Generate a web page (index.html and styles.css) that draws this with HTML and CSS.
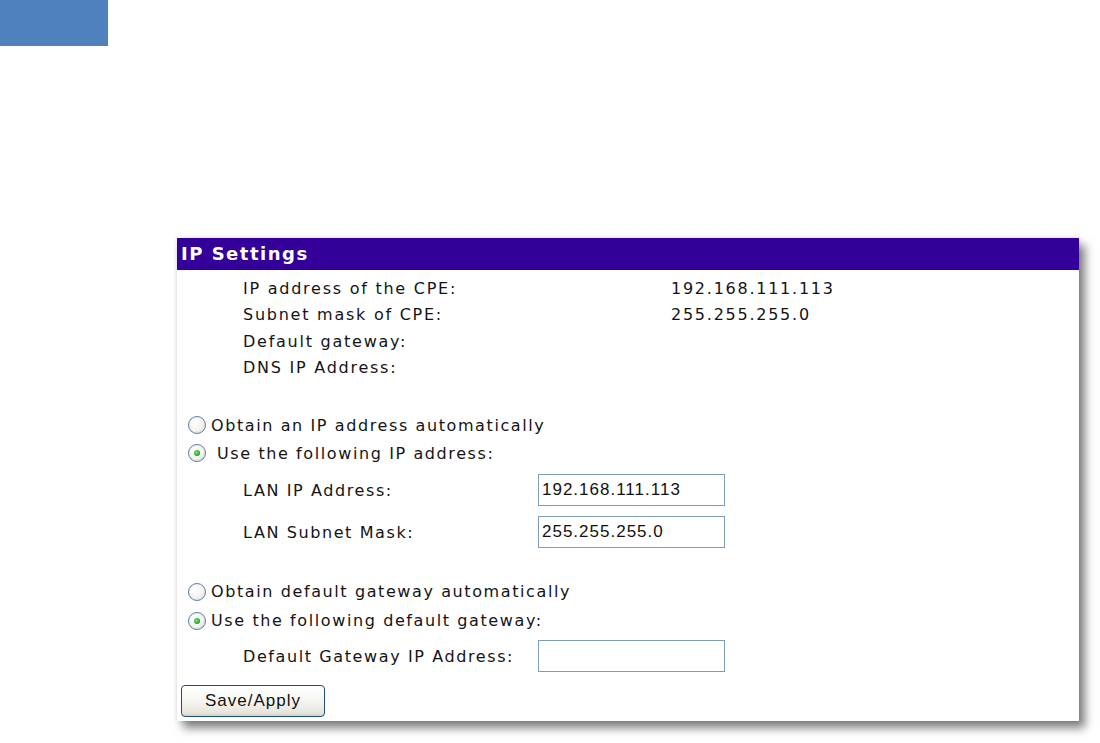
FILE: index.html
```html
<!DOCTYPE html>
<html>
<head>
<meta charset="utf-8">
<title>IP Settings</title>
<link rel="stylesheet" href="styles.css">
</head>
<body>
<div class="corner-block"></div>
<div class="panel">
  <div class="panel-title">IP Settings</div>
  <div class="info">
    <div class="info-label">IP address of the CPE:</div><div class="info-value">192.168.111.113</div>
    <div class="info-label">Subnet mask of CPE:</div><div class="info-value">255.255.255.0</div>
    <div class="info-label">Default gateway:</div><div class="info-value"></div>
    <div class="info-label">DNS IP Address:</div><div class="info-value"></div>
  </div>

  <div class="radio-group first-group">
    <label class="radio-row"><span class="radio"></span><span class="radio-text">Obtain an IP address automatically</span></label>
    <label class="radio-row"><span class="radio checked"></span><span class="radio-text spaced">Use the following IP address:</span></label>
  </div>
  <div class="field-group">
    <div class="field-row"><span class="field-label">LAN IP Address:</span><span class="field-input">192.168.111.113</span></div>
    <div class="field-row"><span class="field-label">LAN Subnet Mask:</span><span class="field-input">255.255.255.0</span></div>
  </div>

  <div class="radio-group second-group">
    <label class="radio-row"><span class="radio"></span><span class="radio-text">Obtain default gateway automatically</span></label>
    <label class="radio-row"><span class="radio checked"></span><span class="radio-text">Use the following default gateway:</span></label>
  </div>
  <div class="field-group gw-group">
    <div class="field-row"><span class="field-label">Default Gateway IP Address:</span><span class="field-input"></span></div>
  </div>
  <div class="actions">
    <span class="btn">Save/Apply</span>
  </div>
</div>
</body>
</html>
```
FILE: styles.css
```css
html, body {
  margin: 0;
  padding: 0;
  background: #ffffff;
}
body {
  font-family: "DejaVu Sans", Verdana, sans-serif;
  font-size: 16px;
  color: #141414;
  padding-bottom: 22px;
}
.corner-block {
  width: 108px;
  height: 46px;
  background: #4f81bd;
}
.panel {
  margin: 192px 0 0 177px;
  width: 902px;
  height: 483px;
  box-sizing: border-box;
  background: #ffffff;
  box-shadow: 6px 7px 9px rgba(0, 0, 0, 0.5), 0 0 4px rgba(0, 0, 0, 0.12);
  display: flex;
  flex-direction: column;
}
.panel-title {
  height: 32px;
  background: #330099;
  color: #ffffff;
  font-weight: bold;
  font-size: 18px;
  letter-spacing: 1.5px;
  line-height: 32px;
  padding-left: 4px;
}
.info {
  display: grid;
  grid-template-columns: 428px auto;
  grid-auto-rows: 26.5px;
  align-items: center;
  padding: 5px 0 0 66px;
  letter-spacing: 1.75px;
}
.radio-group {
  display: flex;
  flex-direction: column;
  padding-left: 11px;
}
.first-group {
  margin-top: 30px;
}
.second-group {
  margin-top: 29px;
}
.second-group .radio-row {
  height: 29px;
}
.radio-row {
  height: 28px;
  display: flex;
  align-items: center;
  letter-spacing: 1.6px;
}
.radio {
  width: 16px;
  height: 16px;
  border-radius: 50%;
  border: 1px solid #5a7da8;
  background: radial-gradient(circle at 35% 35%, #ffffff 0%, #f2f2ee 55%, #d6d6cf 100%);
  box-sizing: content-box;
  flex: none;
  display: flex;
  align-items: center;
  justify-content: center;
  margin-right: 5px;
}
.radio.checked::after {
  content: "";
  width: 6px;
  height: 6px;
  border-radius: 50%;
  background: radial-gradient(circle at 40% 40%, #7fe37f 0%, #21a121 70%);
}
.radio-text.spaced {
  padding-left: 6px;
}
.field-group {
  display: flex;
  flex-direction: column;
  gap: 10px;
  padding-left: 66px;
  margin-top: 7px;
}
.gw-group {
  margin-top: 5px;
}
.field-row {
  display: flex;
  align-items: center;
  height: 32px;
  letter-spacing: 1.6px;
}
.field-label {
  width: 295px;
  flex: none;
}
.field-input {
  width: 187px;
  height: 32px;
  box-sizing: border-box;
  border: 1px solid #7f9db9;
  padding: 0 3px;
  display: flex;
  align-items: center;
  font-family: "Liberation Sans", Arial, sans-serif;
  font-size: 17px;
  letter-spacing: 1px;
  color: #111111;
}
.actions {
  padding: 13px 0 0 4px;
}
.btn {
  display: inline-flex;
  align-items: center;
  justify-content: center;
  width: 144px;
  height: 32px;
  box-sizing: border-box;
  border: 1px solid #1c4f7f;
  border-radius: 4px;
  background: linear-gradient(#ffffff 0%, #f6f6f1 50%, #e6e4da 90%, #d4d0c4 100%);
  font-family: "Liberation Sans", Arial, sans-serif;
  font-size: 17px;
  letter-spacing: 1px;
  color: #111111;
}
```
